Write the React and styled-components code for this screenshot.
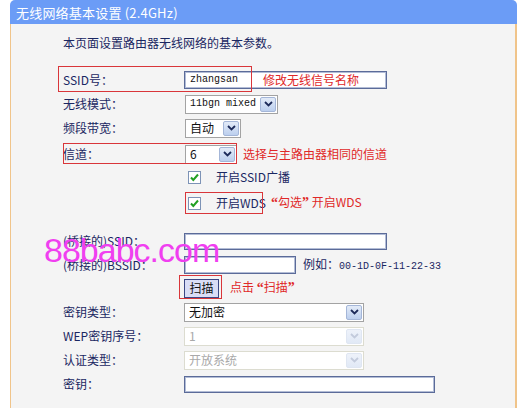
import React from 'react';
import styled, { createGlobalStyle } from 'styled-components';

const Global = createGlobalStyle`
  html, body { margin: 0; padding: 0; background: #fff; }
  body {
    width: 521px; height: 408px; overflow: hidden;
    font-family: "Noto Sans CJK SC", "Liberation Sans", sans-serif;
  }
`;

const Panel = styled.div`
  margin-left: 10px;
  width: 507px;
  height: 408px;
  display: flex;
  flex-direction: column;
`;

const Header = styled.div`
  height: 24px;
  flex: none;
  background: #6b9cf6;
  border-radius: 5px 5px 0 0;
  color: #fff;
  font-size: 13px;
  padding-left: 6px;
  display: flex;
  align-items: center;
  line-height: 1;
  letter-spacing: 0.2px;
`;

const Body = styled.div`
  position: relative;
  flex: 1;
  background: #f4f4f4;
  border-left: 1px solid #f0c48a;
  border-right: 2px solid #f0c48a;
  padding: 9px 0 0 52px;
`;

const Intro = styled.div`
  height: 20px;
  display: flex;
  align-items: center;
  font-size: 12px;
  color: #1a2762;
  line-height: 1;
`;

const Row = styled.div`
  position: relative;
  display: grid;
  grid-template-columns: 121px 1fr;
  align-items: center;
  height: ${p => p.$h || 24}px;
  margin-top: ${p => p.$mt || 0}px;
`;

const Label = styled.div`
  font-size: 12px;
  color: #1a2762;
  white-space: nowrap;
  line-height: 1;
`;

const Value = styled.div`
  display: flex;
  align-items: center;
  gap: ${p => p.$gap || 0}px;
  padding-left: ${p => p.$pl || 0}px;
  white-space: nowrap;
`;

const TextBox = styled.div`
  box-sizing: border-box;
  width: ${p => p.$w}px;
  height: ${p => p.$h || 18}px;
  background: #fff;
  border: 1px solid #5b6b99;
  box-shadow: inset 0 0 0 1px #b3bdd6;
  display: flex;
  align-items: center;
  padding-left: 5px;
`;

const Mono = styled.span`
  font-family: "Liberation Mono", "DejaVu Sans Mono", monospace;
  font-size: 10px;
  color: ${p => p.$c || '#111'};
  line-height: 1;
`;

const Note = styled.span`
  font-size: 12px;
  color: #e02828;
  line-height: 1;
  margin-left: ${p => p.$ml || 0}px;
`;

const Quote = styled.span`
  font-family: "Liberation Serif", serif;
  font-size: 14px;
  font-weight: bold;
`;

const Hint = styled.span`
  font-size: 12px;
  color: #1a2762;
  line-height: 1;
`;

const SelectBox = styled.div`
  box-sizing: border-box;
  width: ${p => p.$w}px;
  height: 19px;
  background: #fff;
  border: 1px solid ${p => (p.$disabled ? '#dcdcd0' : '#a3a3a3')};
  display: flex;
  align-items: center;
  justify-content: space-between;
  padding: 0 1px 0 4px;
`;

const SelectText = styled.span`
  line-height: 1;
  color: ${p => (p.$disabled ? '#a9a9a9' : '#111')};
  font-family: ${p => (p.$mono ? '"Liberation Mono", monospace' : 'inherit')};
  font-size: ${p => (p.$mono ? '10px' : '12px')};
`;

const DropButton = styled.div`
  box-sizing: border-box;
  width: 16px;
  height: 15px;
  border-radius: 2px;
  border: 1px solid ${p => (p.$disabled ? '#dfe6f2' : '#a4b6d8')};
  background: ${p =>
    p.$disabled
      ? 'linear-gradient(#eef2fa, #e1e9f6)'
      : 'linear-gradient(#e3ebf8, #bccfee)'};
  display: flex;
  align-items: center;
  justify-content: center;
`;

const CheckItem = styled.div`
  display: flex;
  align-items: center;
  gap: 15px;
  padding-left: 4px;
`;

const ScanButton = styled.div`
  box-sizing: border-box;
  width: 35px;
  height: 19px;
  background: #d9ddf6;
  border: 1px solid #3b4785;
  display: flex;
  align-items: center;
  justify-content: center;
  font-size: 12px;
  color: #111;
  line-height: 1;
`;

const Mark = styled.div`
  position: absolute;
  box-sizing: border-box;
  left: ${p => p.$l}px;
  top: ${p => p.$t}px;
  width: ${p => p.$w}px;
  height: ${p => p.$h}px;
  border: 1.5px solid #d9363a;
  pointer-events: none;
  z-index: 2;
`;

const Watermark = styled.div`
  position: absolute;
  left: 33px;
  top: 209px;
  font-family: "Liberation Sans", Arial, sans-serif;
  font-size: 34px;
  line-height: 1;
  letter-spacing: -1px;
  color: #f03ff0;
  z-index: 3;
  pointer-events: none;
`;

function Chevron({ disabled }) {
  return (
    <svg width="9" height="6" viewBox="0 0 9 6">
      <polyline
        points="1,1 4.5,4.5 8,1"
        fill="none"
        stroke={disabled ? '#c3cbdc' : '#1d2b5a'}
        strokeWidth="1.8"
      />
    </svg>
  );
}

function Select({ w, text, mono, disabled }) {
  return (
    <SelectBox $w={w} $disabled={disabled}>
      <SelectText $mono={mono} $disabled={disabled}>{text}</SelectText>
      <DropButton $disabled={disabled}>
        <Chevron disabled={disabled} />
      </DropButton>
    </SelectBox>
  );
}

function Checkbox() {
  return (
    <svg width="13" height="13" viewBox="0 0 13 13">
      <rect x="0.5" y="0.5" width="12" height="12" fill="#fff" stroke="#7d93b6" />
      <polyline points="3,6.5 5.3,9 10,3.5" fill="none" stroke="#22a022" strokeWidth="2" />
    </svg>
  );
}

export default function App() {
  return (
    <>
      <Global />
      <Panel>
        <Header>无线网络基本设置 (2.4GHz)</Header>
        <Body>
          <Intro>本页面设置路由器无线网络的基本参数。</Intro>

          <Row $mt={15}>
            <Label>SSID号：</Label>
            <Value>
              <TextBox $w={203}>
                <Mono>zhangsan</Mono>
                <Note $ml={25}>修改无线信号名称</Note>
              </TextBox>
            </Value>
            <Mark $l={-5} $t={-2} $w={194} $h={26} />
          </Row>

          <Row>
            <Label>无线模式：</Label>
            <Value $pl={1}>
              <Select w={93} text="11bgn mixed" mono />
            </Value>
          </Row>

          <Row>
            <Label>频段带宽：</Label>
            <Value $pl={1}>
              <Select w={56} text="自动" />
            </Value>
          </Row>

          <Row $h={28}>
            <Label>信道：</Label>
            <Value $pl={1} $gap={6}>
              <Select w={52} text="6" />
              <Note>选择与主路由器相同的信道</Note>
            </Value>
            <Mark $l={0} $t={3} $w={174} $h={21} />
          </Row>

          <Row $h={18}>
            <Label />
            <CheckItem>
              <Checkbox />
              <Hint>开启SSID广播</Hint>
            </CheckItem>
          </Row>

          <Row $h={34}>
            <Label />
            <CheckItem>
              <Checkbox />
              <Hint>开启WDS</Hint>
              <Note $ml={-10}>
                <Quote>“</Quote>勾选<Quote>”</Quote> 开启WDS
              </Note>
            </CheckItem>
            <Mark $l={122} $t={6} $w={78} $h={22} />
          </Row>

          <Row $mt={9}>
            <Label>(桥接的)SSID：</Label>
            <Value>
              <TextBox $w={203} $h={17} />
            </Value>
          </Row>

          <Row>
            <Label>(桥接的)BSSID：</Label>
            <Value $gap={7}>
              <TextBox $w={112} />
              <Hint>
                例如：<Mono $c="#1a2762">00-1D-0F-11-22-33</Mono>
              </Hint>
            </Value>
          </Row>

          <Row $h={22}>
            <Label />
            <Value $gap={11}>
              <ScanButton>扫描</ScanButton>
              <Note>
                点击 <Quote>“</Quote>扫描<Quote>”</Quote>
              </Note>
            </Value>
            <Mark $l={116} $t={-2} $w={43} $h={24} />
          </Row>

          <Row $mt={1}>
            <Label>密钥类型：</Label>
            <Value>
              <Select w={180} text="无加密" />
            </Value>
          </Row>

          <Row>
            <Label>WEP密钥序号：</Label>
            <Value>
              <Select w={180} text="1" disabled />
            </Value>
          </Row>

          <Row>
            <Label>认证类型：</Label>
            <Value>
              <Select w={180} text="开放系统" disabled />
            </Value>
          </Row>

          <Row>
            <Label>密钥：</Label>
            <Value>
              <TextBox $w={251} $h={17} />
            </Value>
          </Row>

          <Watermark>88babc.com</Watermark>
        </Body>
      </Panel>
    </>
  );
}
